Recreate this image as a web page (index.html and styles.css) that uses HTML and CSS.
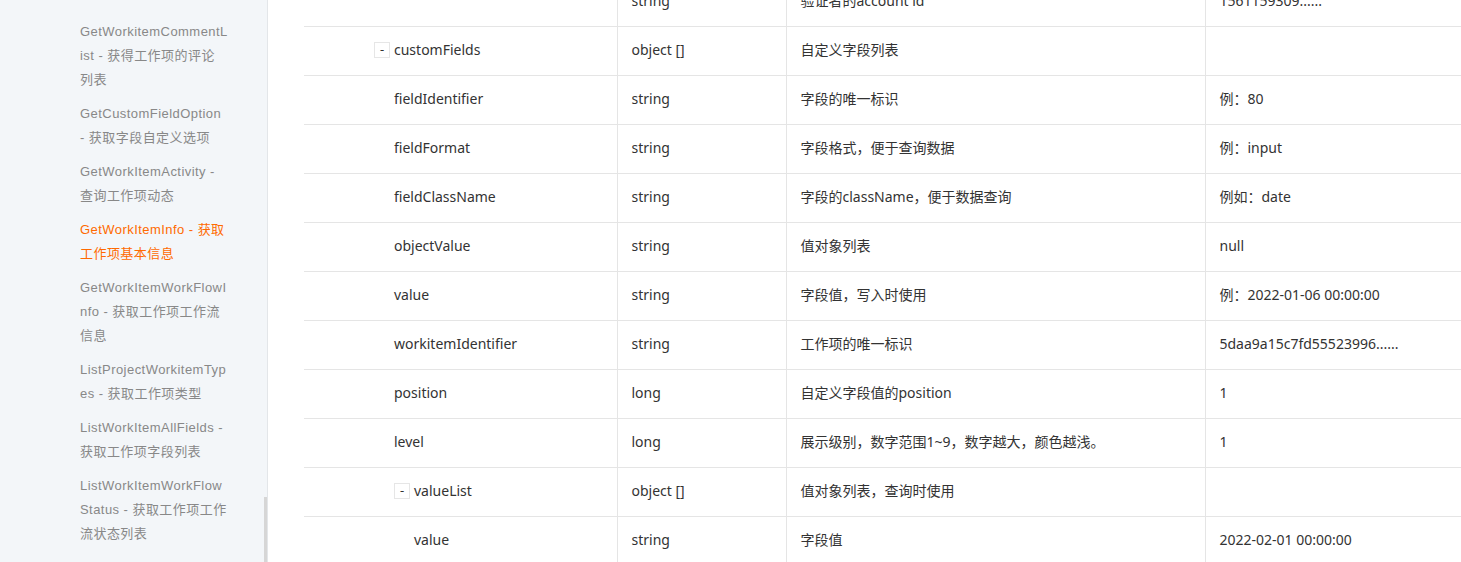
FILE: index.html
```html
<!DOCTYPE html>
<html lang="zh-CN">
<head>
<meta charset="utf-8">
<title>GetWorkItemInfo</title>
<link rel="stylesheet" href="styles.css">
</head>
<body>
<div class="page">
  <aside class="sidebar">
    <ul class="nav">
      <li class="nav-item">GetWorkitemCommentList - 获得工作项的评论<span class="word">列表</span></li>
      <li class="nav-item">GetCustomFieldOption - 获取字段自定义选项</li>
      <li class="nav-item">GetWorkItemActivity - 查询工作项动态</li>
      <li class="nav-item active">GetWorkItemInfo - 获取工作项基本信息</li>
      <li class="nav-item">GetWorkItemWorkFlowInfo - 获取工作项工作流信息</li>
      <li class="nav-item">ListProjectWorkitemTypes - 获取工作项类型</li>
      <li class="nav-item">ListWorkItemAllFields - 获取工作项字段列表</li>
      <li class="nav-item">ListWorkItemWorkFlowStatus - 获取工作项工作流状态列表</li>
    </ul>
    <div class="scroll-thumb"></div>
  </aside>
  <main class="content">
    <table class="params">
      <colgroup>
        <col class="c-name"><col class="c-type"><col class="c-desc"><col class="c-ex">
      </colgroup>
      <tbody>
        <tr><td class="name"></td><td>string</td><td>验证者的account id</td><td>1561159309......</td></tr>
        <tr><td class="name lv1"><span class="toggle">-</span>customFields</td><td>object []</td><td>自定义字段列表</td><td></td></tr>
        <tr><td class="name lv2">fieldIdentifier</td><td>string</td><td>字段的唯一标识</td><td>例：80</td></tr>
        <tr><td class="name lv2">fieldFormat</td><td>string</td><td>字段格式，便于查询数据</td><td>例：input</td></tr>
        <tr><td class="name lv2">fieldClassName</td><td>string</td><td>字段的className，便于数据查询</td><td>例如：date</td></tr>
        <tr><td class="name lv2">objectValue</td><td>string</td><td>值对象列表</td><td>null</td></tr>
        <tr><td class="name lv2">value</td><td>string</td><td>字段值，写入时使用</td><td>例：2022-01-06 00:00:00</td></tr>
        <tr><td class="name lv2">workitemIdentifier</td><td>string</td><td>工作项的唯一标识</td><td>5daa9a15c7fd55523996......</td></tr>
        <tr><td class="name lv2">position</td><td>long</td><td>自定义字段值的position</td><td>1</td></tr>
        <tr><td class="name lv2">level</td><td>long</td><td>展示级别，数字范围1~9，数字越大，颜色越浅。</td><td>1</td></tr>
        <tr><td class="name lv2"><span class="toggle">-</span>valueList</td><td>object []</td><td>值对象列表，查询时使用</td><td></td></tr>
        <tr><td class="name lv3">value</td><td>string</td><td>字段值</td><td>2022-02-01 00:00:00</td></tr>
      </tbody>
    </table>
  </main>
</div>
</body>
</html>
```
FILE: styles.css
```css
* { box-sizing: border-box; }
html, body { margin: 0; padding: 0; background: #fff; }
body { overflow: hidden; height: 562px; }

.page {
  display: flex;
  height: 562px;
  overflow: hidden;
}

.sidebar {
  position: relative;
  flex: 0 0 268px;
  background: #f3f6f9;
  border-right: 1px solid #e3e6e9;
  padding: 20px 0 0 80px;
  font-family: "Liberation Sans", Arial, "Noto Sans CJK SC", sans-serif;
  font-size: 13px;
  letter-spacing: 0.45px;
  color: #888;
}
.nav { list-style: none; margin: 0; padding: 0; width: 149px; }
.nav-item {
  line-height: 24px;
  word-break: break-all;
  margin-bottom: 10px;
}
.nav-item .word { white-space: nowrap; }
.nav-item.active { color: #ff6a00; }

.scroll-thumb {
  position: absolute;
  right: 0;
  top: 497px;
  width: 3px;
  height: 80px;
  background: #d6d6d6;
}

.content {
  flex: 1 1 auto;
  min-width: 0;
  overflow: hidden;
  padding-left: 36px;
}

.params {
  border-collapse: collapse;
  table-layout: fixed;
  width: 1201px;
  margin-top: -22px;
  font-family: "Noto Sans", "Noto Sans CJK SC", sans-serif;
  font-size: 14px;
  color: #333;
}
.c-name { width: 313px; }
.c-type { width: 169px; }
.c-desc { width: 419px; }
.c-ex { width: 300px; }

.params td {
  padding: 12px 14px 14px;
  line-height: 22px;
  height: 48px;
  border-bottom: 1px solid #e5e5e5;
  border-right: 1px solid #e5e5e5;
  white-space: nowrap;
  vertical-align: top;
}
.params td:last-child { border-right: none; }

.name.lv1 { padding-left: 70px; }
.name.lv2 { padding-left: 90px; }
.name.lv3 { padding-left: 110px; }

.toggle {
  display: inline-block;
  width: 16px;
  height: 16px;
  border: 1px solid #e6e6e6;
  margin: 3px 4px 0 0;
  text-align: center;
  font-size: 13px;
  line-height: 13px;
  vertical-align: top;
  color: #333;
}
```
